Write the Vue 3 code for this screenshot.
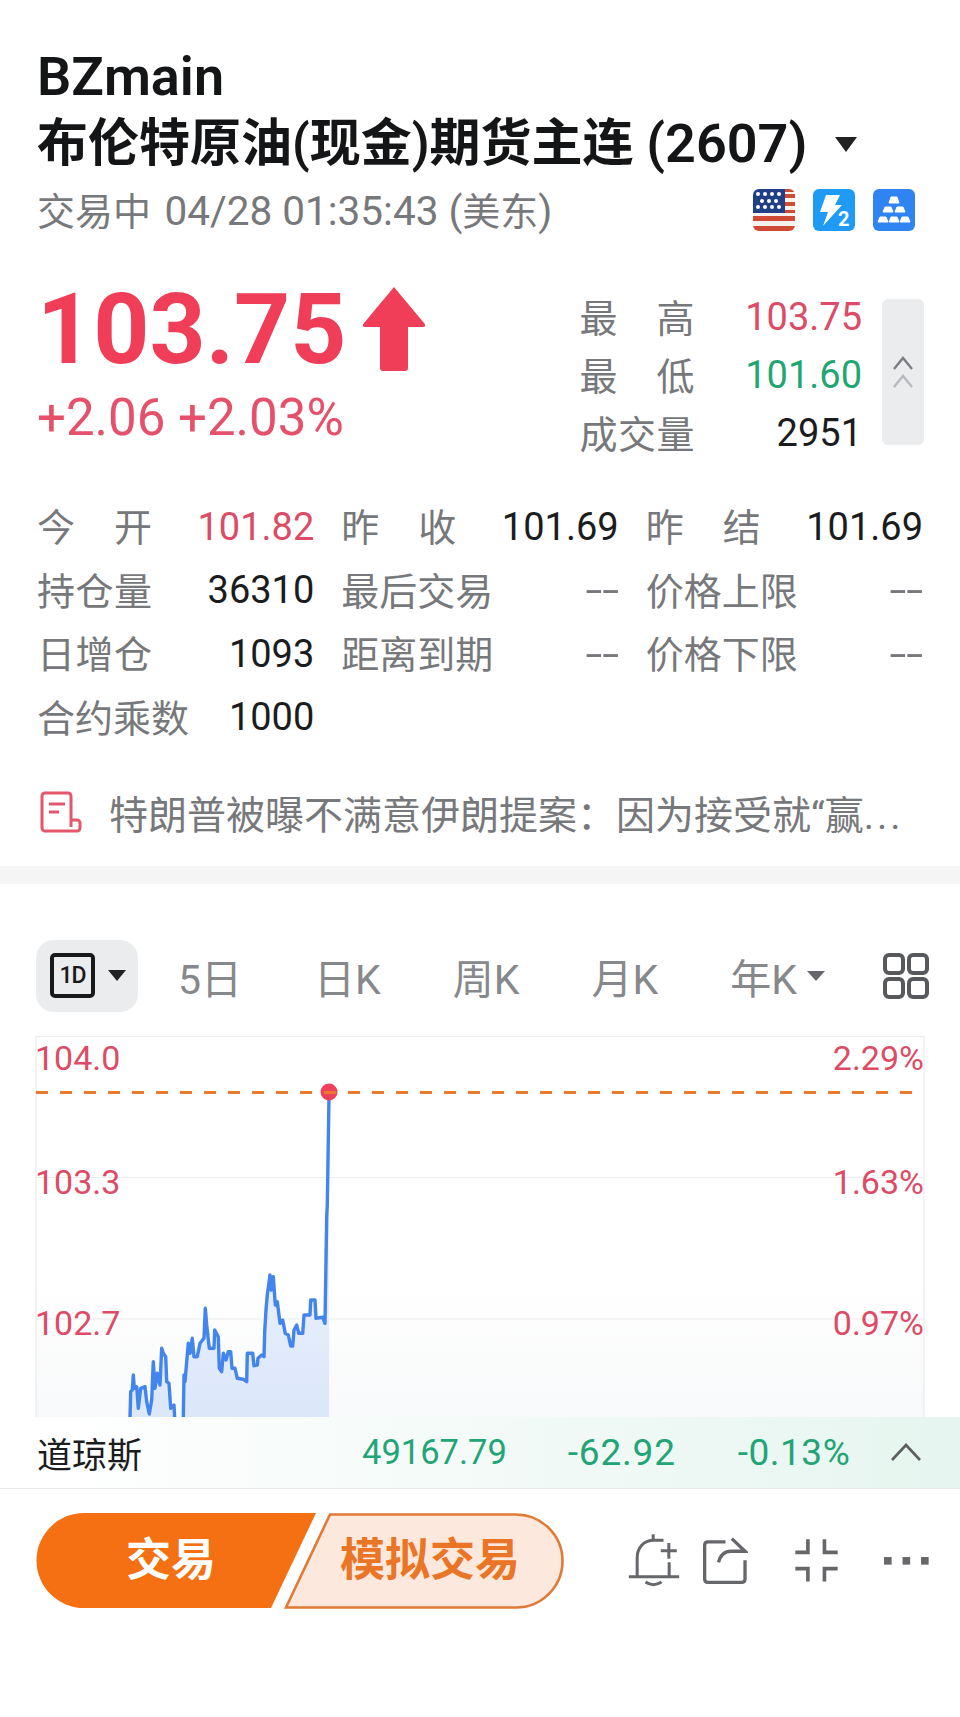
<script setup>
const stats = [
  { label: '最高', value: '103.75', tone: 'up' },
  { label: '最低', value: '101.60', tone: 'down' },
  { label: '成交量', value: '2951', tone: '' },
]

const fields = [
  { label: '今开', value: '101.82', tone: 'up' },
  { label: '昨收', value: '101.69' },
  { label: '昨结', value: '101.69' },
  { label: '持仓量', value: '36310' },
  { label: '最后交易', value: '--', tone: 'muted' },
  { label: '价格上限', value: '--', tone: 'muted' },
  { label: '日增仓', value: '1093' },
  { label: '距离到期', value: '--', tone: 'muted' },
  { label: '价格下限', value: '--', tone: 'muted' },
  { label: '合约乘数', value: '1000' },
]

const tabs = ['5日', '日K', '周K', '月K']

// Intraday samples, kept at 3x so the fine steps stay whole numbers.
const samples = [
  [90,1075],[92,995],[97,990],[100,945],[103,985],[108,985],[110,980],[115,1045],[122,985],[135,980],
  [140,1025],[148,1062],[155,1020],[160,905],[165,985],[172,940],[180,975],[185,865],[190,880],[197,890],
  [200,965],[207,970],[212,1045],[222,1035],[224,1075],[237,1110],[250,1075],[252,945],[255,965],[260,905],
  [265,850],[270,880],[277,835],[282,890],[292,890],[300,850],[312,835],[316,745],[320,795],[328,865],
  [342,865],[344,810],[355,830],[358,925],[365,935],[370,880],[378,900],[385,875],[392,875],[396,925],
  [405,925],[412,955],[430,958],[440,965],[442,880],[458,880],[462,917],[472,915],[474,895],[485,885],
  [492,890],[494,815],[498,750],[502,705],[510,645],[514,690],[520,650],[526,735],[532,725],[540,790],
  [548,780],[556,820],[565,825],[572,858],[578,858],[582,810],[590,795],[596,820],[608,820],[612,765],
  [630,765],[632,720],[645,720],[648,775],[668,772],[675,790],[680,470],[682,435],[687,105],
]
const points = samples.map(([x, y]) => [100 + x / 3, 1060 + y / 3])
const linePath = points.map(([x, y]) => `${x.toFixed(1)},${y.toFixed(1)}`).join(' ')
const areaPath = `${linePath} 329,1440 130,1440`

const axisLeft = [
  { y: 1070, text: '104.0' },
  { y: 1194, text: '103.3' },
  { y: 1335, text: '102.7' },
]
const axisRight = [
  { y: 1070, text: '2.29%' },
  { y: 1194, text: '1.63%' },
  { y: 1335, text: '0.97%' },
]
</script>

<template>
  <div class="page">
    <header class="head">
      <h1 class="code">BZmain</h1>
      <h2 class="name">布伦特原油(现金)期货主连 <span class="name-num">(2607)</span><span class="caret"></span></h2>
      <div class="meta">
        <span class="meta-text">交易中 <span class="meta-time">04/28 01:35:43 (</span>美东<span class="meta-time">)</span></span>
        <div class="badges">
          <svg class="badge" viewBox="0 0 42 42">
            <defs><clipPath id="flagClip"><rect width="42" height="42" rx="6" /></clipPath></defs>
            <g clip-path="url(#flagClip)">
              <rect width="42" height="42" fill="#f6f1ee" />
              <path d="M0 27h42v5H0zM0 37h42v5H0zM24 5h18v4H24zM24 13h18v4H24zM24 21h18v3H24z" fill="#cf4b33" />
              <path d="M24 0h18v3H24z" fill="#cf4b33" />
              <rect width="32" height="24" fill="#1f3f86" />
              <g fill="#fff">
                <circle cx="5" cy="5" r="2" /><circle cx="12" cy="5" r="2" /><circle cx="19" cy="5" r="2" /><circle cx="26" cy="5" r="2" />
                <circle cx="9" cy="12" r="2" /><circle cx="16" cy="12" r="2" /><circle cx="23" cy="12" r="2" />
                <circle cx="5" cy="18" r="2" /><circle cx="12" cy="18" r="2" /><circle cx="19" cy="18" r="2" /><circle cx="26" cy="18" r="2" />
              </g>
            </g>
          </svg>
          <svg class="badge" viewBox="0 0 42 42">
            <rect width="42" height="42" rx="6" fill="#1f9bf6" />
            <path d="M13 6H27L22 16H29L10 37L15 23H7Z" fill="#fff" />
            <text x="25" y="37" class="badge-num">2</text>
          </svg>
          <svg class="badge" viewBox="0 0 42 42">
            <rect width="42" height="42" rx="6" fill="#2f84f2" />
            <g fill="#fff" stroke="#fff" stroke-width="1" stroke-linejoin="round">
              <path d="M18 8h6l2 6H16z" />
              <path d="M12 18h6l2 5H10zM24 18h6l2 5H22z" />
              <path d="M7 28h6l2 5H5zM18 28h6l2 5H16zM29 28h6l2 5H27z" />
            </g>
          </svg>
        </div>
      </div>
    </header>

    <section class="quote">
      <div class="quote-main">
        <div class="price">
          <span>103.75</span>
          <svg class="arrow" viewBox="0 0 64 84">
            <path d="M32 0 62 36Q65 40 60 40H46V81a3 3 0 0 1-3 3H21a3 3 0 0 1-3-3V40H4Q-1 40 2 36z" fill="#f03d58" />
          </svg>
        </div>
        <div class="change">+2.06 +2.03%</div>
      </div>
      <div class="stats">
        <div v-for="s in stats" :key="s.label" class="stat">
          <span class="label">{{ s.label }}</span>
          <span class="value" :class="s.tone">{{ s.value }}</span>
        </div>
      </div>
      <div class="fold">
        <svg viewBox="0 0 20 32" width="20" height="32">
          <path d="M1 13 10 2l9 11" fill="none" stroke="#7d7e82" stroke-width="2.4" />
          <path d="M1 31 10 20l9 11" fill="none" stroke="#b9babd" stroke-width="2.4" />
        </svg>
      </div>
    </section>

    <section class="fields">
      <div v-for="f in fields" :key="f.label" class="field">
        <span class="label" :class="{ wide: f.label.length === 4 }">{{ f.label }}</span>
        <span class="value" :class="f.tone">{{ f.value }}</span>
      </div>
    </section>

    <section class="news">
      <svg class="news-icon" viewBox="0 0 43 42">
        <path d="M31 36V5a3 3 0 0 0-3-3H5a3 3 0 0 0-3 3v32a3 3 0 0 0 3 3h32a3 3 0 0 0 3-3v-5a3 3 0 0 0-3-3h-6" fill="none" stroke="#e4566c" stroke-width="3" />
        <path d="M9 13h16M9 21h10" stroke="#e4566c" stroke-width="3" fill="none" />
      </svg>
      <span class="news-text">特朗普被曝不满意伊朗提案：因为接受就“赢<span class="news-more">...</span></span>
    </section>

    <div class="band"></div>

    <nav class="toolbar">
      <div class="period">
        <span class="period-box">1D</span>
        <span class="period-caret"></span>
      </div>
      <div class="tabs">
        <span v-for="t in tabs" :key="t">{{ t }}</span>
        <span class="tab-year">年K<i></i></span>
      </div>
      <svg class="layout-icon" viewBox="0 0 46 46">
        <g fill="none" stroke="#58595c" stroke-width="4">
          <rect x="2" y="2" width="18" height="18" rx="4" />
          <rect x="26" y="2" width="18" height="18" rx="4" />
          <rect x="2" y="26" width="18" height="18" rx="4" />
          <rect x="26" y="26" width="18" height="18" rx="4" />
        </g>
      </svg>
    </nav>

    <section class="chart">
      <svg viewBox="0 1036 960 381" width="960" height="381">
        <defs>
          <linearGradient id="areaFill" x1="0" y1="1200" x2="0" y2="1417" gradientUnits="userSpaceOnUse">
            <stop offset="0" stop-color="#eef3fd" />
            <stop offset="1" stop-color="#dce7fb" />
          </linearGradient>
          <linearGradient id="chartFade" x1="0" y1="1280" x2="0" y2="1417" gradientUnits="userSpaceOnUse">
            <stop offset="0" stop-color="#ffffff" />
            <stop offset="1" stop-color="#f8f9fa" />
          </linearGradient>
        </defs>
        <rect x="36" y="1280" width="888" height="137" fill="url(#chartFade)" />
        <g stroke="#ebecee" stroke-width="1.2" fill="none">
          <path d="M36 1417V1036.5H924V1417" />
          <path d="M36 1177.5H924M36 1319H924" />
        </g>
        <polygon :points="areaPath" fill="url(#areaFill)" />
        <polyline :points="linePath" fill="none" stroke="#4285ec" stroke-width="3.4" stroke-linejoin="round" />
        <circle cx="329" cy="1092" r="8.5" fill="#f0415a" />
        <line x1="36" y1="1092.5" x2="918" y2="1092.5" stroke="#ea7a2e" stroke-width="3" stroke-dasharray="12 12" />
        <text v-for="a in axisLeft" :key="a.text" x="35" :y="a.y" class="axis">{{ a.text }}</text>
        <text v-for="a in axisRight" :key="a.text" x="924" :y="a.y" class="axis" text-anchor="end">{{ a.text }}</text>
      </svg>
    </section>

    <section class="ticker">
      <span class="ticker-name">道琼斯</span>
      <span class="ticker-num n1">49167.79</span>
      <span class="ticker-num n2">-62.92</span>
      <span class="ticker-num n3">-0.13%</span>
      <svg class="ticker-fold" viewBox="0 0 30 18">
        <path d="M1 17 15 2l14 15" fill="none" stroke="#5d5e61" stroke-width="2.6" />
      </svg>
    </section>

    <footer class="actions">
      <div class="trade">
        <svg class="trade-shape" viewBox="0 0 532 96">
          <path d="M48 0H280L235 95H48A47.5 47.5 0 0 1 48 0Z" fill="#f47012" />
          <path d="M294 1.5H480A46.5 46.5 0 0 1 480 94.5H250Z" fill="#fce8dc" stroke="#e07a35" stroke-width="2.6" />
        </svg>
        <span class="trade-real">交易</span>
        <span class="trade-sim">模拟交易</span>
      </div>
      <div class="tools">
        <svg class="tool bell" viewBox="85 100 155 165">
          <g fill="none" stroke="#66676a" stroke-width="9">
            <path d="M191 122H162C130 122 112 145 112 175V231" />
            <path d="M87 231H238M160 104V120M208 188V231M183 153H231M207 130V177" />
            <path d="M137 247Q160 263 185 247" />
          </g>
        </svg>
        <svg class="tool share" viewBox="305 110 140 145">
          <g fill="none" stroke="#66676a" stroke-width="10">
            <path d="M378 125H325Q315 125 315 135V237Q315 247 325 247H427Q437 247 437 237V180" />
            <path d="M357 187Q365 153 395 153H437L397 115" />
          </g>
        </svg>
        <svg class="tool squeeze" viewBox="580 115 136 135">
          <g fill="none" stroke="#66676a" stroke-width="11">
            <path d="M622 118V158H584M672 118V158H712M584 207H622V246M712 207H672V246" />
          </g>
        </svg>
        <svg class="tool dots" viewBox="850 170 136 24">
          <g fill="#66676a">
            <rect x="850" y="170" width="23" height="23" />
            <rect x="906" y="170" width="23" height="23" />
            <rect x="962" y="170" width="23" height="23" />
          </g>
        </svg>
      </div>
    </footer>
  </div>
</template>

<style>
body {
  background: #fff;
}
</style>

<style scoped>
.page {
  width: 960px;
  height: 1717px;
  overflow: hidden;
  background: #fff;
  font-family: Roboto, "Noto Sans CJK SC", sans-serif;
  color: #1b1c1e;
}

.head {
  padding: 44px 37px 0;
}
.code,
.name {
  margin: 0;
  font-weight: 600;
  line-height: 66px;
  color: #141517;
}
.code {
  font-size: 54px;
}
.name {
  display: flex;
  align-items: center;
  font-size: 51px;
  line-height: 68px;
  white-space: pre;
}
.name-num {
  font-size: 54px;
}
.caret {
  margin-left: 28px;
  border-left: 11px solid transparent;
  border-right: 11px solid transparent;
  border-top: 15px solid #222;
}
.meta {
  display: flex;
  justify-content: space-between;
  align-items: center;
  height: 64px;
  font-size: 38px;
  color: #77787b;
}
.meta-text {
  padding-bottom: 4px;
}
.meta-time {
  font-size: 40.5px;
}
.meta-text > .meta-time:first-child {
  margin-left: 4px;
}
.badges {
  display: flex;
  gap: 18px;
  margin-right: 8px;
}
.badge {
  width: 42px;
  height: 42px;
}
.badge-num {
  font: 700 20px Roboto, sans-serif;
  fill: #fff;
}

.quote {
  display: flex;
  align-items: flex-start;
  padding: 33px 36px 0 37px;
  height: 220px;
}
.quote-main {
  width: 547px;
}
.price {
  display: flex;
  align-items: center;
  gap: 15px;
  height: 110px;
  font-size: 98px;
  font-weight: 700;
  line-height: 110px;
  color: #f03d58;
}
.arrow {
  width: 64px;
  height: 84px;
  margin-top: -2px;
}
.change {
  margin-top: 3px;
  font-size: 51px;
  line-height: 60px;
  color: #e5506a;
}
.stats {
  width: 285px;
  padding-top: 13px;
}
.stat {
  display: flex;
  justify-content: space-between;
  align-items: center;
  height: 58px;
  font-size: 38px;
}
.label {
  padding-bottom: 4px;
  color: #77787b;
  width: 115px;
  text-align-last: justify;
  white-space: nowrap;
  flex: none;
}
.label.wide {
  width: 152px;
}
.value {
  color: #1b1c1e;
}
.up {
  color: #dc4c66;
}
.down {
  color: #1fa673;
}
.muted {
  display: inline-block;
  color: #77787b;
  transform: scaleX(1.6);
  transform-origin: right center;
}
.fold {
  display: flex;
  justify-content: center;
  align-items: center;
  flex: none;
  width: 42px;
  height: 146px;
  margin: 24px 0 0 20px;
  border-radius: 6px;
  background: #ebecee;
}

.fields {
  display: grid;
  grid-template-columns: repeat(3, 1fr);
  column-gap: 27px;
  padding: 0 37px;
}
.field {
  display: flex;
  justify-content: space-between;
  align-items: center;
  height: 63.5px;
  font-size: 38px;
}

.news {
  display: flex;
  align-items: center;
  gap: 26px;
  height: 107px;
  padding: 0 40px;
  margin-top: 9.5px;
  font-size: 39px;
  color: #77787b;
}
.news-icon {
  width: 43px;
  height: 42px;
  flex: none;
}
.news-text {
  white-space: nowrap;
}
.news-more {
  letter-spacing: 3px;
  font-family: Roboto, sans-serif;
}
.band {
  height: 18px;
  background: #f5f5f6;
}

.toolbar {
  display: flex;
  align-items: center;
  height: 72px;
  margin: 56px 31px 24px 36px;
  font-size: 41px;
  color: #87888b;
}
.period {
  display: flex;
  align-items: center;
  width: 102px;
  height: 72px;
  padding-left: 14px;
  border-radius: 18px;
  background: #ebecee;
  box-sizing: border-box;
}
.period-box {
  display: flex;
  justify-content: center;
  align-items: center;
  width: 45px;
  height: 45px;
  box-sizing: border-box;
  border: 4px solid #18191b;
  border-radius: 5px;
  font-size: 23px;
  font-weight: 500;
  letter-spacing: -1px;
  color: #18191b;
}
.period-caret {
  margin-left: 13px;
  border-left: 9px solid transparent;
  border-right: 9px solid transparent;
  border-top: 11px solid #222;
}
.tabs {
  display: flex;
  gap: 72px;
  margin-left: 40px;
  white-space: nowrap;
}
.tab-year {
  display: flex;
  align-items: center;
}
.tab-year i {
  margin-left: 10px;
  border-left: 9px solid transparent;
  border-right: 9px solid transparent;
  border-top: 10px solid #66676a;
}
.layout-icon {
  width: 46px;
  height: 46px;
  margin-left: auto;
}

.chart {
  height: 381px;
  overflow: hidden;
}
.chart svg {
  display: block;
}
.axis {
  font: 400 34px Roboto, sans-serif;
  fill: #dc4c66;
}

.ticker {
  display: flex;
  align-items: center;
  height: 72px;
  padding: 0 39px 0 37px;
  box-sizing: border-box;
  border-bottom: 1.5px solid #e8e9ea;
  background: linear-gradient(90deg, #fff 5%, #e6f5ef 100%);
  font-size: 37px;
}
.ticker-name {
  width: 325px;
  color: #1b1c1e;
  font-size: 35px;
}
.ticker-num {
  color: #23a477;
}
.n1 {
  font-size: 34.5px;
}
.n2 {
  margin-left: 61px;
  letter-spacing: 0.8px;
}
.n3 {
  margin-left: 62px;
  letter-spacing: 0.5px;
}
.ticker-fold {
  width: 30px;
  height: 18px;
  margin-left: auto;
}

.actions {
  display: flex;
  align-items: flex-start;
  padding: 24px 31px 0 36px;
}
.trade {
  position: relative;
  display: flex;
  flex: none;
  width: 532px;
  height: 96px;
  font-size: 45px;
  font-weight: 700;
  line-height: 96px;
}
.trade-shape {
  position: absolute;
  inset: 0;
}
.trade-real {
  position: relative;
  margin-left: 90px;
  color: #fff;
}
.trade-sim {
  position: relative;
  margin-left: 124px;
  color: #ea7526;
}
.tools {
  display: flex;
  align-items: center;
  height: 96px;
  margin-left: auto;
}
.tool {
  flex: none;
}
.bell {
  width: 52px;
  height: 55px;
}
.share {
  width: 47px;
  height: 48px;
  margin-left: 21px;
}
.squeeze {
  width: 45px;
  height: 45px;
  margin-left: 46px;
}
.dots {
  width: 45px;
  height: 8px;
  margin-left: 45px;
}
</style>
